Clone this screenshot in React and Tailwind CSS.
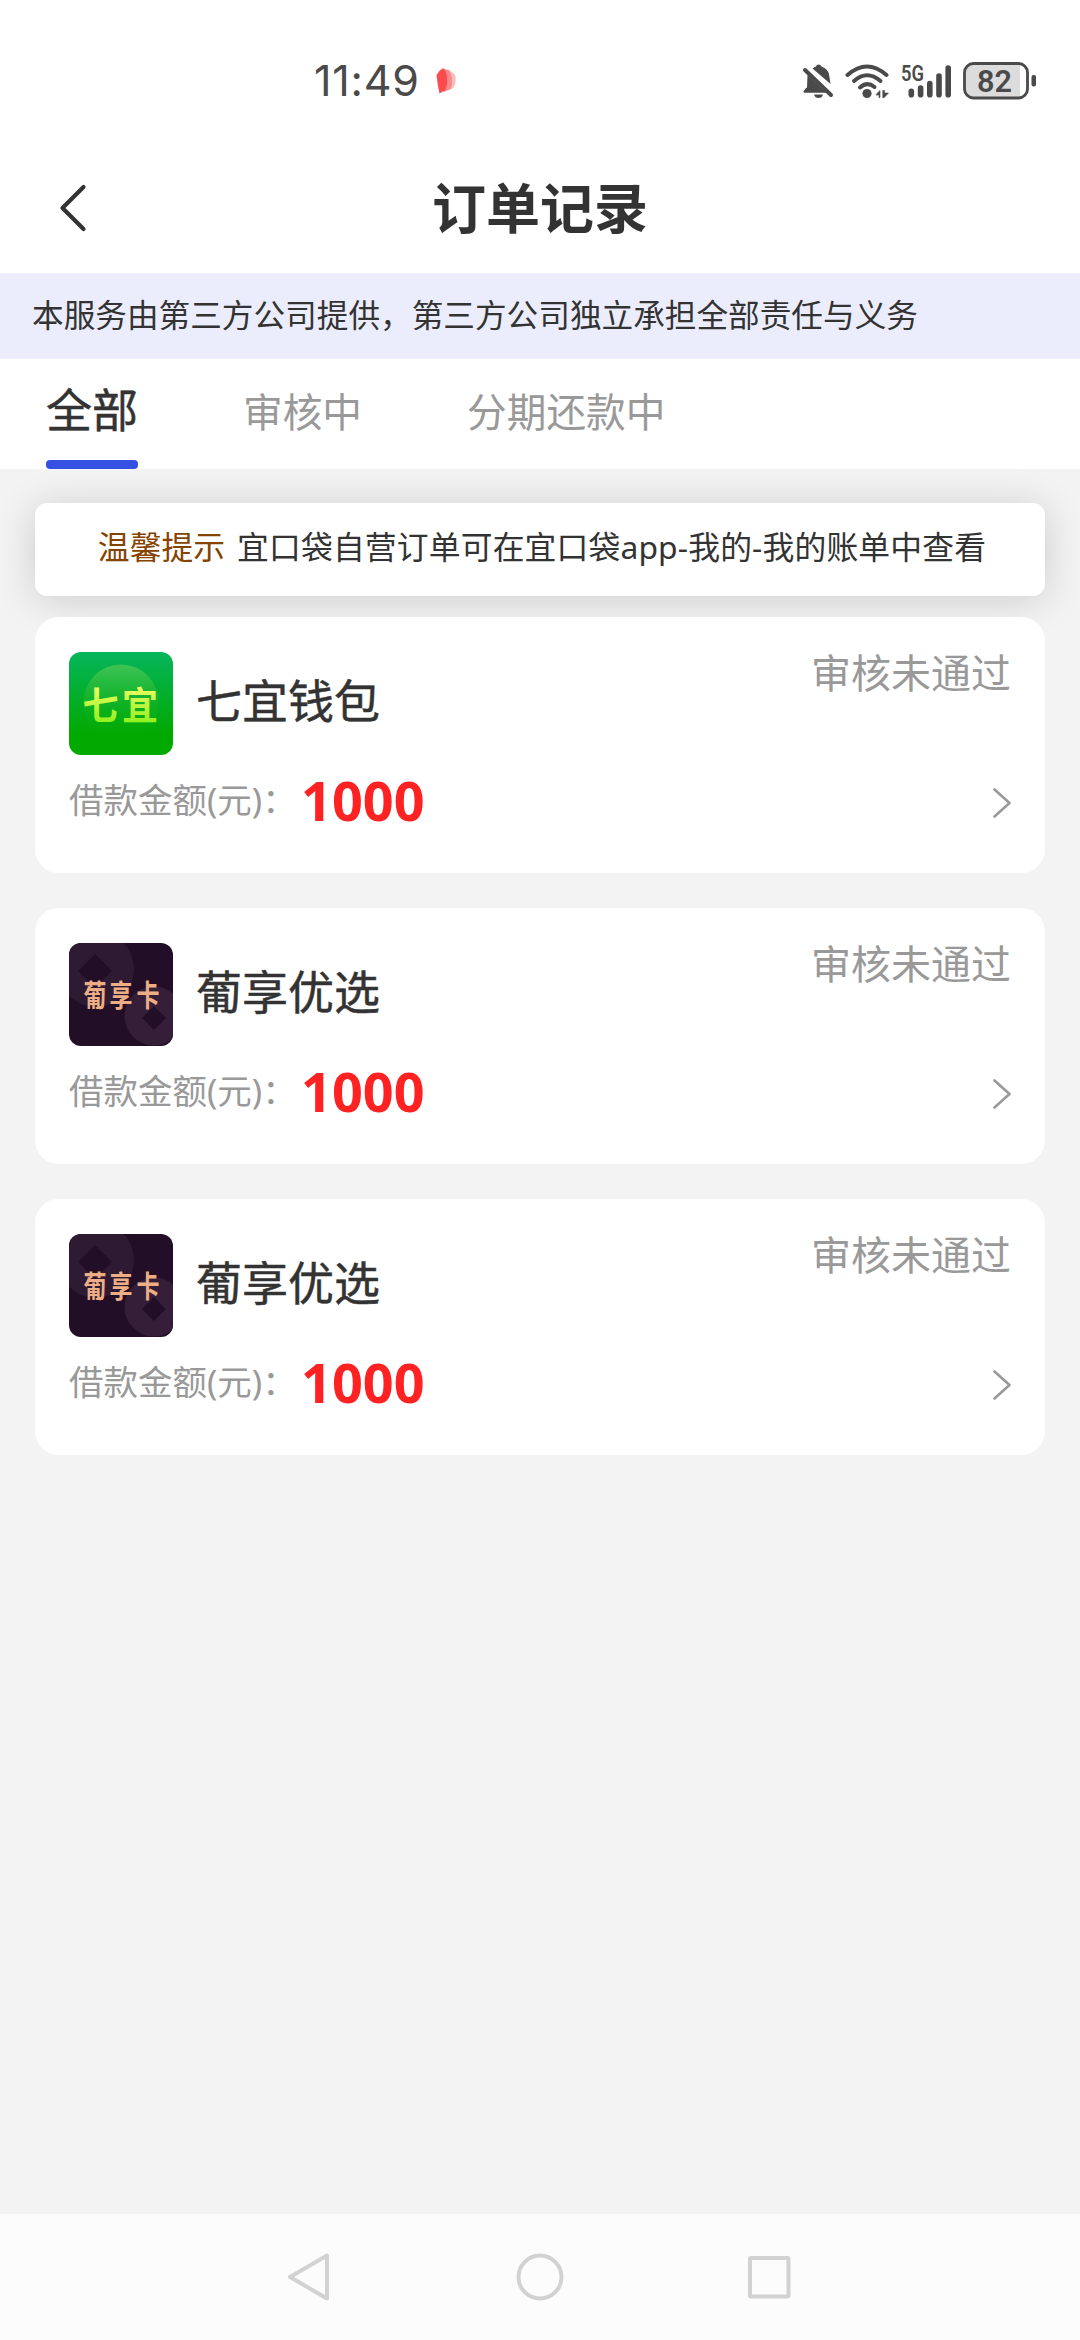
import { ChevronLeft } from 'lucide-react';

const TABS = [
  { label: '全部', active: true },
  { label: '审核中', active: false },
  { label: '分期还款中', active: false },
];

const ORDERS = [
  { id: 1, name: '七宜钱包', logo: 'qiyi', amount: '1000', status: '审核未通过' },
  { id: 2, name: '葡享优选', logo: 'puxiang', amount: '1000', status: '审核未通过' },
  { id: 3, name: '葡享优选', logo: 'puxiang', amount: '1000', status: '审核未通过' },
];

// \uFF0C and \uFF1A are the full-width comma and colon
const NOTICE = '本服务由第三方公司提供\uFF0C第三方公司独立承担全部责任与义务';
const AMOUNT_LABEL = '借款金额(元)\uFF1A';

// ─── Status bar ──────────────────────────────────────────────────────────────

function BellOffIcon() {
  return (
    <svg className="w-8 h-9" viewBox="0 0 32 36" fill="#4a4a4a">
      <path d="M5.500 12 L23 28.500 H3 V26 L5 24.500 Z" />
      <path d="M10.500 5.500 Q12.500 4 14 3.600 Q14.500 1.500 16.500 1.500 Q18.500 1.500 19.500 3.600 Q26.500 6 27.300 13 L28.500 21 Z" />
      <path d="M1.500 28.500 Q1.500 27 3 27 H24 V29.800 H3 Q1.500 29.800 1.500 28.500 Z" />
      <path d="M12 31.500 H21 Q20 35 16.500 35 Q13 35 12 31.500 Z" />
      <path d="M3 7 L29 32" stroke="#4a4a4a" strokeWidth="4" strokeLinecap="round" />
    </svg>
  );
}

function WifiIcon() {
  return (
    <svg className="w-11 h-9" viewBox="0 0 44 36" fill="none" stroke="#4a4a4a" strokeWidth="4" strokeLinecap="round">
      <path d="M2.500 12 Q22 -5 41.500 12" />
      <path d="M9 18 Q22 6.500 35.500 18" />
      <path d="M15 24.500 Q22 18 29.500 24" />
      <circle cx="22" cy="30.500" r="4.600" fill="#4a4a4a" stroke="none" />
      <path d="M31.500 31 L35 27.500 V34.500 H34 V32 H31.500 Z M38 27.500 H39.500 V30 H43.500 L39 34.800 H38 Z" fill="#4a4a4a" stroke="#4a4a4a" strokeWidth="0.600" />
    </svg>
  );
}

function SignalIcon() {
  return (
    <svg className="w-[51px] h-11 overflow-visible" viewBox="0 -4 51 44">
      <text x="0" y="17.500" fontFamily="Roboto, sans-serif" fontWeight="600" fontSize="22" textLength="23" lengthAdjust="spacingAndGlyphs" fill="#4a4a4a">
        5G
      </text>
      <g stroke="#4a4a4a" strokeWidth="5.600" strokeLinecap="round">
        <path d="M10.300 28.200 V31.700" />
        <path d="M19.600 25 V31.700" />
        <path d="M28.800 20.500 V31.700" />
        <path d="M38 13 V31.700" />
        <path d="M47.200 5 V31.700" />
      </g>
    </svg>
  );
}

function BatteryIcon() {
  return (
    <svg className="w-[74px] h-[38px]" viewBox="0 0 74 38">
      <path d="M10 2 H57 V36 H10 Q2 36 2 28 V10 Q2 2 10 2 Z" fill="#dcdcdc" />
      <rect x="1.500" y="1.500" width="63" height="34.500" rx="9" fill="none" stroke="#4a4a4a" strokeWidth="2.800" />
      <rect x="68.500" y="13" width="4.500" height="11.500" rx="2" fill="#4a4a4a" />
      <text x="31.500" y="30" textAnchor="middle" fontFamily="Roboto, sans-serif" fontWeight="600" fontSize="32" textLength="35" lengthAdjust="spacingAndGlyphs" fill="#4a4a4a">
        82
      </text>
    </svg>
  );
}

function StatusBar() {
  return (
    <div className="flex items-center justify-between h-[161px] pl-[314px] pr-[43px]">
      <div className="flex items-center">
        <span className="w-[107px] font-[Inter,sans-serif] text-[43px] leading-none text-[#4a4a4a] whitespace-nowrap tracking-[0.8px]">
          11:49
        </span>
        <svg className="w-5 h-7 ml-[15px]" viewBox="0 0 20 28">
          <path d="M11 3 Q17 4 19.500 9 Q20.500 17 17 21 L9 24.500 Z" fill="#fbbcbc" />
          <path d="M8 2 L13 3 Q18 11 15 22 L7 25 Z" fill="#f78a8a" />
          <path d="M0.500 8 Q3 3.500 7 1 L9.500 4 Q13 14 9.500 23 L3.500 26.500 Q1.500 18 0.500 8 Z" fill="#fb4b4e" />
        </svg>
      </div>
      <div className="flex items-center">
        <BellOffIcon />
        <div className="ml-[11px]"><WifiIcon /></div>
        <div className="ml-3"><SignalIcon /></div>
        <div className="ml-[11px]"><BatteryIcon /></div>
      </div>
    </div>
  );
}

// ─── Order logos ─────────────────────────────────────────────────────────────

function QiyiLogo() {
  return (
    <svg className="w-[104px] h-[103px] rounded-xl" viewBox="0 0 104 103">
      <defs>
        <linearGradient id="qiyi-bg" x1="0" y1="0" x2="0" y2="1">
          <stop offset="0" stopColor="#05b55c" />
          <stop offset="0.800" stopColor="#02a900" />
        </linearGradient>
        <linearGradient id="qiyi-disc" x1="0" y1="0" x2="0" y2="1">
          <stop offset="0" stopColor="#3fc455" />
          <stop offset="1" stopColor="#02a900" stopOpacity="0" />
        </linearGradient>
        <linearGradient id="qiyi-text" x1="0" y1="0" x2="0" y2="1">
          <stop offset="0.200" stopColor="#f2ff66" />
          <stop offset="0.850" stopColor="#92f020" />
        </linearGradient>
      </defs>
      <rect width="104" height="103" fill="url(#qiyi-bg)" />
      <circle cx="52" cy="50" r="37.500" fill="url(#qiyi-disc)" />
      <g transform="translate(0 67) scale(1 1.050)" fontFamily="'Noto Sans CJK SC', sans-serif" fontWeight="700" fontSize="36" textAnchor="middle" fill="url(#qiyi-text)">
        <text x="31.500" y="0">七</text>
        <text x="71" y="0">宜</text>
      </g>
    </svg>
  );
}

function PuxiangLogo() {
  return (
    <svg className="w-[104px] h-[103px] rounded-xl" viewBox="0 0 104 103">
      <rect width="104" height="103" fill="#220f27" />
      <circle cx="27" cy="26" r="38" fill="#2f1a34" />
      <circle cx="85" cy="73" r="29.500" fill="#341e38" />
      <path d="M26 11 L43 28 L26 45 L9 28 Z" fill="#220f27" />
      <path d="M85 63 L97 75 L85 87 L73 75 Z" fill="#220f27" />
      <g transform="translate(0 63) scale(1 1.300)" fontFamily="'Noto Sans CJK SC', sans-serif" fontWeight="700" fontSize="23" textAnchor="middle" fill="#edae86">
        <text x="26" y="0">葡</text>
        <text x="52" y="0">享</text>
        <text x="79" y="0">卡</text>
      </g>
    </svg>
  );
}

function OrderCard({ order }) {
  return (
    <div className="h-64 pt-[35px] px-[34px] rounded-3xl bg-white">
      <div className="flex items-start">
        {order.logo === 'qiyi' ? <QiyiLogo /> : <PuxiangLogo />}
        <h3 className="ml-[23px] mt-5 text-[46px] leading-[56px] text-[#333333] [-webkit-text-stroke:0.5px]">{order.name}</h3>
        <span className="ml-auto text-[40px] leading-[42px] text-[#999999]">{order.status}</span>
      </div>
      <div className="flex items-center h-16 mt-[13px]">
        <span className="w-[232px] text-[34.5px] leading-none text-[#999999] whitespace-nowrap">{AMOUNT_LABEL}</span>
        <span className="font-['Noto_Sans',sans-serif] text-[54px] leading-none font-bold text-[#ff2222]">{order.amount}</span>
        <svg className="w-[18px] h-[30px] mt-[5px] ml-auto" viewBox="0 0 18 30" fill="none" stroke="#999999" strokeWidth="2.600" strokeLinecap="round" strokeLinejoin="round">
          <path d="M1.500 1.500 L16.500 15 L1.500 28.500" />
        </svg>
      </div>
    </div>
  );
}

function SystemNav() {
  return (
    <div className="flex items-center h-[126px] pl-[287px] bg-[#fcfcfc]">
      <svg className="w-[504px] h-12" viewBox="0 0 504 48" fill="none" stroke="#d2d2d2" strokeWidth="4" strokeLinejoin="round">
        <path d="M40 2.500 V45.500 L3 24 Z" />
        <circle cx="253" cy="24" r="21.500" />
        <rect x="463" y="5" width="38.500" height="38.500" rx="1" />
      </svg>
    </div>
  );
}

export default function App() {
  return (
    <div className="flex flex-col w-[1080px] h-[2340px] overflow-hidden bg-[#f3f3f3] font-['Noto_Sans','Noto_Sans_CJK_SC',sans-serif]">
      <header className="bg-white">
        <StatusBar />
        <div className="grid grid-cols-3 items-center h-28 pb-[19px]">
          <ChevronLeft className="w-[88px] h-[84px] ml-[29px] text-[#333333]" strokeWidth={1.2} />
          <h1 className="text-center text-[54px] leading-none font-bold text-[#333333]">订单记录</h1>
        </div>
      </header>

      <div className="flex items-center h-[86px] pl-8 pb-0.5 bg-[#ebedfc]">
        <p className="text-[31.65px] leading-none text-[#333333] whitespace-nowrap">{NOTICE}</p>
      </div>

      {/* Tabs */}
      <nav className="flex h-[110px] pl-[46px] gap-[105px] bg-white">
        {TABS.map((tab) =>
          tab.active ? (
            <div key={tab.label} className="flex flex-col justify-between">
              <span className="pt-[22px] text-[46px] leading-[56px] text-[#333333] [-webkit-text-stroke:0.5px]">{tab.label}</span>
              <span className="h-[9px] rounded bg-[#3451e4]" />
            </div>
          ) : (
            <span key={tab.label} className="pt-[25px] text-[39.7px] leading-[56px] text-[#999999]">{tab.label}</span>
          )
        )}
      </nav>

      <main className="flex-1 px-[35px] pt-[34px]">
        <div className="flex items-center justify-center gap-3 h-[93px] pb-1.5 pl-1 rounded-xl bg-white shadow-[0_4px_40px_rgba(0,0,0,0.16)] text-[31.8px] leading-none whitespace-nowrap">
          <span className="text-[#854300]">温馨提示</span>
          <span className="text-[#333333] tracking-[0.15px]">宜口袋自营订单可在宜口袋app-我的-我的账单中查看</span>
        </div>
        <div className="relative flex flex-col gap-[35px] mt-[21px]">
          {ORDERS.map((order) => (
            <OrderCard key={order.id} order={order} />
          ))}
        </div>
      </main>

      <SystemNav />
    </div>
  );
}
